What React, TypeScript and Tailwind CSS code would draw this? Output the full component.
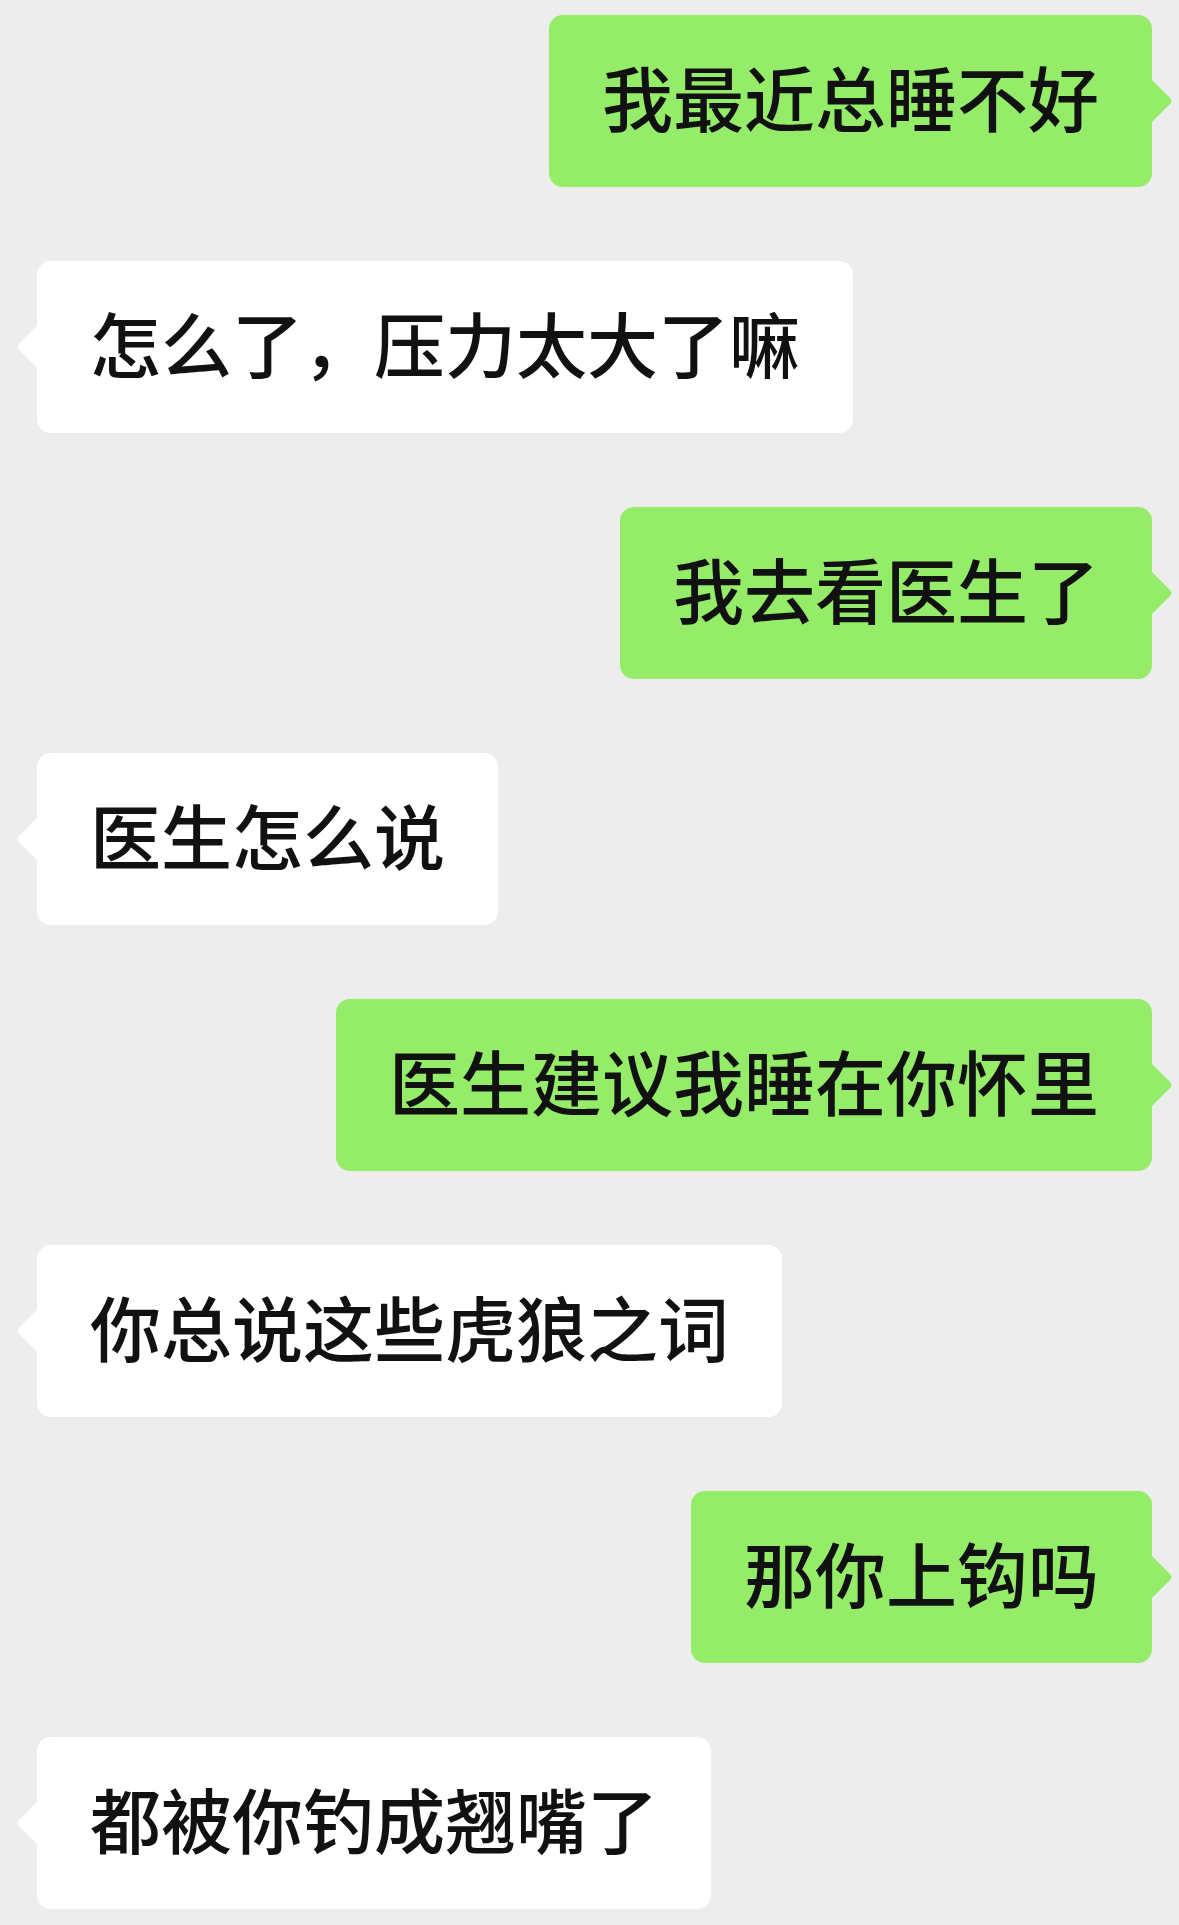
import { ReactNode } from 'react';

interface Message {
    text: string;
    mine: boolean;
}

const messages: Message[] = [
    { text: '我最近总睡不好', mine: true },
    { text: '怎么了，压力太大了嘛', mine: false },
    { text: '我去看医生了', mine: true },
    { text: '医生怎么说', mine: false },
    { text: '医生建议我睡在你怀里', mine: true },
    { text: '你总说这些虎狼之词', mine: false },
    { text: '那你上钩吗', mine: true },
    { text: '都被你钓成翘嘴了', mine: false },
];

// small triangle pointing at the speaker
function Tail({ mine }: { mine: boolean }) {
    if (mine) {
        return (
            <svg
                className="absolute top-1/2 left-full -translate-y-1/2"
                width="21"
                height="42"
                viewBox="0 0 21 42"
            >
                <path d="M0 0 L18 18 Q21 21 18 24 L0 42 Z" fill="#95ec69" />
            </svg>
        );
    }
    return (
        <svg
            className="absolute top-1/2 right-full -translate-y-1/2"
            width="22"
            height="42"
            viewBox="0 0 22 42"
        >
            <path d="M22 0 L4 18 Q1 21 4 24 L22 42 Z" fill="#ffffff" />
        </svg>
    );
}

function Bubble({ mine, children }: { mine: boolean; children: ReactNode }) {
    return (
        <div className={mine ? 'flex justify-end' : 'flex justify-start'}>
            <div
                className={
                    'relative flex h-[172px] items-center rounded-[14px] px-[53px] pb-[12px] text-[71px] leading-none font-medium text-[#111111] ' +
                    (mine ? 'bg-[#95ec69]' : 'bg-white')
                }
            >
                <span className="whitespace-nowrap">{children}</span>
                <Tail mine={mine} />
            </div>
        </div>
    );
}

export default function App() {
    return (
        <div
            className="flex min-h-[1925px] w-full flex-col gap-[74px] bg-[#ededed] pt-[15px] pr-[27px] pl-[37px] pb-[15px]"
            style={{ fontFamily: '"Noto Sans CJK SC", "Noto Sans", sans-serif' }}
        >
            {messages.map((m, i) => (
                <Bubble key={i} mine={m.mine}>
                    {m.text}
                </Bubble>
            ))}
        </div>
    );
}
